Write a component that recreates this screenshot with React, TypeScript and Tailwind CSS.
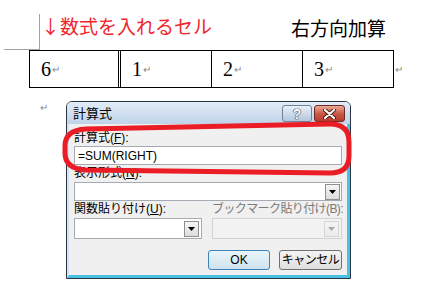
const uiFont = "font-['Liberation_Sans','Noto_Sans_CJK_JP',sans-serif]";

function ParaMark() {
  return <span className="ml-[1px] text-[10px] leading-none text-[#8a8a8a]">↵</span>;
}

function Cell({ value, double }: { value: string; double?: boolean }) {
  return (
    <div
      className={
        "flex h-full w-[91px] items-center pl-[11px] " +
        (double ? "border-r-[3px] border-double border-black" : "border-r border-black")
      }
    >
      <span className="font-['Liberation_Serif',serif] text-[20px] leading-none">{value}</span>
      <ParaMark />
    </div>
  );
}

function Arrow({ disabled }: { disabled?: boolean }) {
  return (
    <div
      className={
        "flex h-[16px] w-[15px] items-center justify-center border bg-gradient-to-b " +
        (disabled
          ? "border-[#d5d5d5] from-[#f4f4f4] to-[#ececec]"
          : "border-[#8e8f8f] from-[#f6f6f6] to-[#dcdcdc]")
      }
    >
      <svg width="7" height="4" viewBox="0 0 7 4">
        <path d="M0 0h7L3.5 4z" fill={disabled ? "#a8a8a8" : "#000"} />
      </svg>
    </div>
  );
}

function Dialog() {
  return (
    <div className={"absolute left-[66px] top-[101px] w-[285px] rounded-t-[6px] border border-[#2c3642] " + uiFont}>
      <div className="flex h-[22px] items-center rounded-t-[5px] bg-gradient-to-b from-[#e2ecf7] to-[#bfd3e9] pl-[6px] pr-[5px]">
        <span className="text-[13px] leading-none text-black">計算式</span>
        <div className="ml-auto flex gap-[2px] self-start pt-[3px]">
          <div className="flex h-[17px] w-[30px] items-center justify-center rounded-[3px] border border-[#6f829a] bg-gradient-to-b from-[#e9f0f8] to-[#b4c7de]">
            <span className="text-[14px] font-bold leading-none text-white [text-shadow:0_0_1px_#24364d,0_0_1px_#24364d,0_0_1px_#24364d]">?</span>
          </div>
          <div className="flex h-[17px] w-[31px] items-center justify-center rounded-[3px] border border-[#6b2a23] bg-gradient-to-b from-[#e9a999] via-[#cb5a48] to-[#b83b2d]">
            <svg width="13" height="10" viewBox="0 0 13 10">
              <path d="M2 1l9 8M11 1l-9 8" stroke="#4a1a14" strokeWidth="4" strokeLinecap="round" />
              <path d="M2 1l9 8M11 1l-9 8" stroke="#fff" strokeWidth="2.2" strokeLinecap="round" />
            </svg>
          </div>
        </div>
      </div>
      <div className="flex flex-col border-l-[2px] border-r-[3px] border-b-[3px] border-l-[#d3e3f2] border-r-[#48bfe5] border-b-[#48bfe5] bg-[#f0f0f0] px-[5px] pb-[5px] pt-[7px] text-[12px] text-black">
        <div className="h-[14px] leading-[14px]">計算式(<span className="underline">F</span>):</div>
        <div className="mt-[1px] flex h-[19px] items-center border border-[#a6abb3] bg-white pl-[3px] leading-none">
          =SUM(RIGHT)
        </div>
        <div className="mt-[1px] h-[14px] leading-[14px]">表示形式(<span className="underline">N</span>):</div>
        <div className="mt-[2px] flex h-[19px] items-center justify-end border border-[#a6abb3] bg-white pr-[1px]">
          <Arrow />
        </div>
        <div className="mt-[1px] flex h-[14px] whitespace-nowrap leading-[14px]">
          <span className="w-[138px] shrink-0">関数貼り付け(<span className="underline">U</span>):</span>
          <span className="tracking-[-0.6px] text-[#7a7a7a]">ブックマーク貼り付け(B):</span>
        </div>
        <div className="mt-[2px] flex gap-[10px]">
          <div className="flex h-[21px] w-[128px] items-center justify-end border border-[#a6abb3] bg-white pr-[2px]">
            <Arrow />
          </div>
          <div className="flex h-[21px] w-[130px] items-center justify-end border border-[#cfd2d6] bg-[#f2f2f2] pr-[2px]">
            <Arrow disabled />
          </div>
        </div>
        <div className="mt-[11px] flex justify-end gap-[9px]">
          <div className="flex h-[20px] w-[62px] items-center justify-center rounded-[3px] border border-[#3c83b8] bg-gradient-to-b from-[#eaf5fb] to-[#cfe3ef] leading-none">
            OK
          </div>
          <div className="flex h-[20px] w-[63px] items-center justify-center rounded-[3px] border border-[#707070] bg-gradient-to-b from-[#f4f4f4] to-[#dedede] leading-none tracking-[-0.5px]">
            キャンセル
          </div>
        </div>
      </div>
    </div>
  );
}

export default function App() {
  return (
    <div className="relative h-[299px] w-[424px] overflow-hidden bg-white font-['Noto_Sans_CJK_JP',sans-serif] text-black">
      <div className="flex items-start pt-[14px]">
        <div className="ml-[4px] h-[36px] w-[36px] border-b border-r border-[#a3a3a3]" />
        <span className="ml-[1px] text-[19px] leading-[24px] text-[#f0262e]">↓数式を入れるセル</span>
        <span className="ml-auto mr-[38px] mt-[2px] text-[19px] leading-[24px]">右方向加算</span>
      </div>
      <div className="flex items-center">
        <div className="ml-[29px] flex h-[38px] border-y border-l border-black">
          <Cell value="6" double />
          <Cell value="1" />
          <Cell value="2" />
          <Cell value="3" />
        </div>
        <ParaMark />
      </div>
      <div className="ml-[39px] mt-[14px] text-[10px] leading-none">
        <ParaMark />
      </div>
      <Dialog />
      <svg className="pointer-events-none absolute left-0 top-0" width="424" height="299">
        <path
          d="M86 129 L330 124 Q349 124 349 142 L349 156 Q349 173 330 173 L86 170 Q65 169 65 153 L65 146 Q65 130 86 129 Z"
          fill="none"
          stroke="#ea1d26"
          strokeWidth="5"
        />
      </svg>
    </div>
  );
}
